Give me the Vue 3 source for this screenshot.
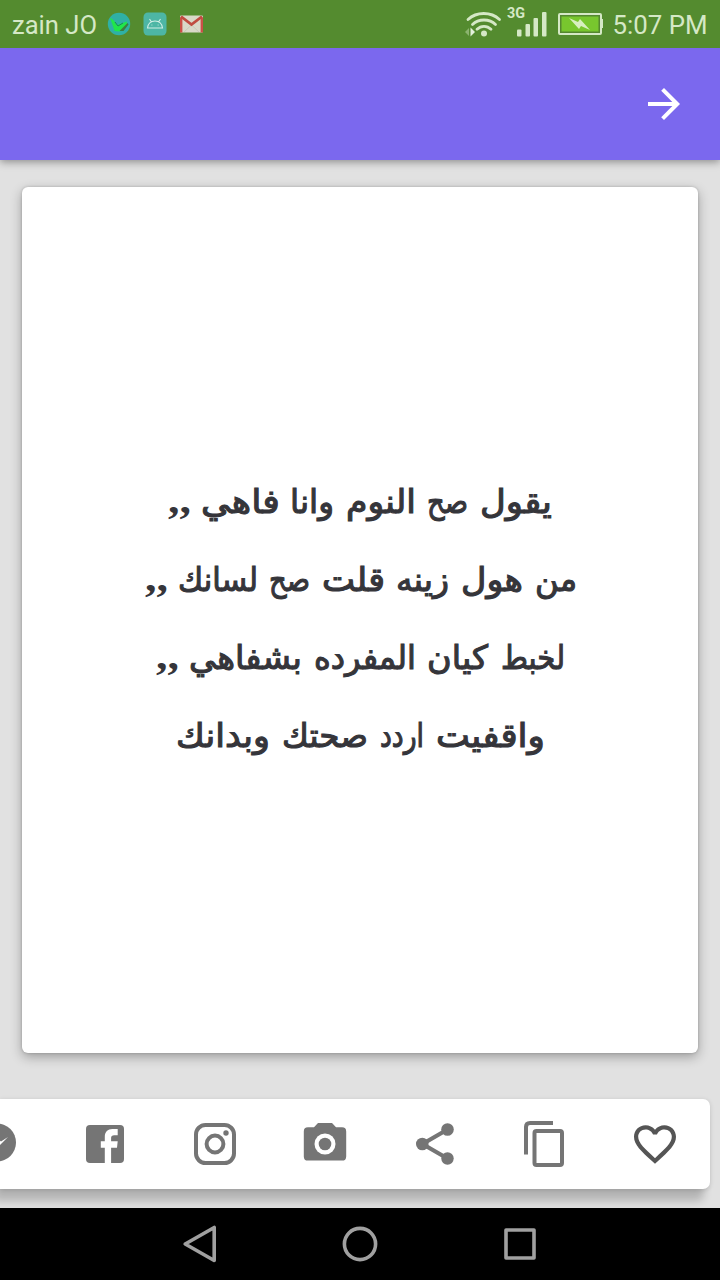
<script setup>
const lines = [
  [['يقول', 480, 552], ['صح', 427, 468], ['النوم', 346, 416], ['وانا', 290, 334], ['فاهي', 201, 280], [',,', 168, 191]],
  [['من', 535, 577], ['هول', 461, 523], ['زينه', 396, 449], ['قلت', 322, 385], ['صح', 269, 310], ['لسانك', 178, 258], [',,', 145, 168]],
  [['لخبط', 501, 565], ['كيان', 427, 488], ['المفرده', 314, 416], ['بشفاهي', 189, 302], [',,', 156, 179]],
  [['واقفيت', 436, 545], ['اردد', 380, 424], ['صحتك', 282, 368], ['وبدانك', 176, 270]]
]
</script>

<template>
  <div class="screen">
    <header class="status">
      <svg width="720" height="48" viewBox="0 0 720 48">
        <g class="st">
          <text x="12" y="34" font-size="26" textLength="85" lengthAdjust="spacingAndGlyphs">zain JO</text>
          <text x="507" y="18" font-size="14" font-weight="700" textLength="18" lengthAdjust="spacingAndGlyphs">3G</text>
          <text x="612.5" y="34" font-size="26" textLength="95" lengthAdjust="spacingAndGlyphs">5:07 PM</text>
        </g>
        <circle cx="119" cy="24" r="11.2" fill="#2fb0a5" />
        <path d="M110 17.500l4 3 3 4.500 10-3.500-.500 5.500-7 4.500-5-.500z" fill="#20e64a" />
        <path d="M119.500 31l8-8 1 1.500-5 6.500z" fill="#3c7d3f" />
        <path d="M115 22l3 4 5-3" fill="none" stroke="#168a5a" stroke-width="1" />
        <rect x="143.500" y="12.500" width="23" height="23" rx="4.500" fill="#4db6a5" />
        <g fill="none" stroke="#d2eee5" stroke-width="1.100">
          <path d="M147.500 28c.4-4 3.300-7 7.500-7s7.100 3 7.500 7zM149.500 19l2 3M160.500 19l-2 3" />
          <path d="M151.500 25h.8M157.700 25h.8" />
        </g>
        <rect x="180" y="15.500" width="23" height="17" rx="1" fill="#d9d9c8" />
        <path d="M184 32l7.500-7 7.500 7" fill="none" stroke="#c5c5b4" stroke-width=".8" />
        <path d="M181.200 32.500V17.500M201.800 32.500V17.500" fill="none" stroke="#cb5147" stroke-width="2.400" />
        <path d="M181 16.500l10.500 8 10.500-8" fill="none" stroke="#c04c40" stroke-width="2.800" />
        <g fill="none" stroke="#d5e8c6" stroke-width="2.800" stroke-linecap="round">
          <path d="M468 19.500c8.500-8 23-8 31.500 0M472.500 24.500c6-6 17-6 23 0M477 29.300c4-4 10-4 14 0" />
        </g>
        <circle cx="484" cy="33.500" r="3" fill="#d5e8c6" />
        <path d="M470.500 27.500v9l4.500-4.500z" fill="#e4f2dc" />
        <path d="M469 28v8l-4-4z" fill="#8bb36f" />
        <g fill="#d5e8c6">
          <rect x="517" y="29.500" width="4.500" height="7" rx="1" />
          <rect x="525.500" y="24" width="4.500" height="12.500" rx="1" />
          <rect x="533.500" y="18" width="4.500" height="18.500" rx="1" />
          <rect x="542" y="12" width="4.500" height="24.500" rx="1" />
          <path d="M601 19h2v9h-2z" />
        </g>
        <rect x="559" y="14" width="42" height="20" rx="1" fill="#548730" stroke="#d5e8c6" stroke-width="2" />
        <rect x="561.500" y="16.500" width="37" height="15" fill="#78c62e" />
        <path d="M569 18l9 4 2-3 10 11-9-4-2 3z" fill="#d8efc0" />
      </svg>
    </header>
    <div class="appbar">
      <svg width="48" height="48" viewBox="0 0 24 24"><path fill="#fff" d="M12 4l-1.410 1.410L16.170 11H4v2h12.170l-5.580 5.590L12 20l8-8z" /></svg>
    </div>
    <main class="main">
      <section class="card">
        <svg v-for="(line, i) in lines" :key="i" class="line" width="676" height="78" viewBox="22 0 676 78">
          <text
            v-for="(w, j) in line" :key="j" :class="{ comma: w[0] === ',,' }" :x="(w[1] + w[2]) / 2" y="52"
            :textLength="w[2] - w[1]" lengthAdjust="spacingAndGlyphs"
          >{{ w[0] }}</text>
        </svg>
      </section>
    </main>
    <nav class="tools">
      <svg width="720" height="90" viewBox="0 1099 720 90" fill="#757575">
        <circle cx="-3" cy="1142.500" r="19" />
        <path d="M-14 1149l11-11 4 3.500 7-4.500-9 9-4-4z" fill="#fff" />
        <rect x="86" y="1125" width="38" height="38" rx="4" />
        <path d="M104.800 1163v-15.200h-4v-6.500h4v-4.500c0-4.800 3-7.800 7.500-7.800h5.400v6.300h-3.600c-2 0-3 1-3 2.500v3.500h6.600l-.7 6.500h-5.900V1163z" fill="#fff" />
        <g fill="none" stroke="#757575" stroke-width="4">
          <rect x="196" y="1125" width="38" height="38" rx="9.500" />
          <circle cx="215" cy="1144" r="8.400" />
        </g>
        <circle cx="226" cy="1133" r="2.700" />
        <path d="M318 1123h14l4 4.200h6q4.200 0 4.200 4.200v25q0 4.200-4.200 4.200h-34q-4.200 0-4.200-4.200v-25q0-4.200 4.200-4.200h6z" />
        <circle cx="325" cy="1144" r="10.500" fill="#fff" />
        <circle cx="325" cy="1144" r="6.300" />
        <path d="M447.500 1129.500L422.500 1144l25 14.500" fill="none" stroke="#757575" stroke-width="4.200" />
        <circle cx="447.500" cy="1129.500" r="6.300" />
        <circle cx="422.300" cy="1144" r="6.300" />
        <circle cx="447.500" cy="1158.500" r="6.200" />
        <path d="M553 1123h-23q-4 0-4 4v27.500" fill="none" stroke="#757575" stroke-width="4" />
        <rect x="534.500" y="1131" width="27.500" height="34" rx="2" fill="none" stroke="#757575" stroke-width="4" />
        <path transform="translate(629.800 1119) scale(2.100)" fill="#555" d="M16.500 3c-1.740 0-3.410.81-4.500 2.090C10.910 3.810 9.240 3 7.500 3 4.420 3 2 5.420 2 8.500c0 3.780 3.400 6.860 8.550 11.540L12 21.350l1.450-1.320C18.600 15.360 22 12.280 22 8.500 22 5.420 19.580 3 16.500 3zm-4.400 15.550l-.1.100-.1-.1C7.140 14.240 4 11.390 4 8.500 4 6.500 5.500 5 7.500 5c1.540 0 3.040.99 3.570 2.360h1.870C13.460 5.990 14.960 5 16.500 5c2 0 3.500 1.500 3.500 3.500 0 2.890-3.140 5.740-7.900 10.050z" />
      </svg>
    </nav>
    <footer class="navbar">
      <svg width="720" height="72" viewBox="0 1208 720 72" fill="none" stroke="#a0a0a0" stroke-width="3.600" stroke-linejoin="round">
        <path d="M214.200 1227.500v33l-29-16.500z" />
        <circle cx="360" cy="1244" r="15.600" />
        <rect x="506" y="1230" width="28" height="28" />
      </svg>
    </footer>
  </div>
</template>

<style>
body { margin: 0; }
</style>
<style scoped>
svg { display: block; flex: none; }
.screen {
  width: 720px;
  height: 1280px;
  display: flex;
  flex-direction: column;
  overflow: hidden;
  background: #e1e1e1;
}
.status { height: 48px; flex: none; background: #548b2f; }
.st { font-family: Roboto, sans-serif; fill: #d5e8c6; }
.appbar {
  height: 112px;
  flex: none;
  display: flex;
  align-items: center;
  justify-content: flex-end;
  padding-right: 32px;
  box-sizing: border-box;
  background: #7b68ee;
  box-shadow: 0 2px 8px rgba(0, 0, 0, .38);
  clip-path: inset(0 0 -20px 0);
}
.main { flex: none; padding: 27px 22px 46px; }
.card {
  height: 866px;
  display: flex;
  flex-direction: column;
  justify-content: center;
  box-sizing: border-box;
  padding-bottom: 6px;
  background: #fff;
  border-radius: 6px;
  box-shadow: 0 4px 12px rgba(0, 0, 0, .3), 0 0 3px rgba(0, 0, 0, .18);
}
.line text {
  font: 400 33px "DejaVu Sans", sans-serif;
  fill: #35353a;
  stroke: #35353a;
  stroke-width: 1.1px;
  direction: rtl;
  text-anchor: middle;
}
.line .comma { font: 700 40px "Liberation Serif", serif; stroke: none; }
.tools {
  width: 710px;
  height: 90px;
  flex: none;
  overflow: visible;
  background: #fff;
  border-radius: 0 7px 7px 0;
  box-shadow: -6px 12px 9px rgba(0, 0, 0, .2), 0 1px 5px rgba(0, 0, 0, .14);
}
.navbar { margin-top: auto; height: 72px; flex: none; background: #000; z-index: 1; }
</style>
